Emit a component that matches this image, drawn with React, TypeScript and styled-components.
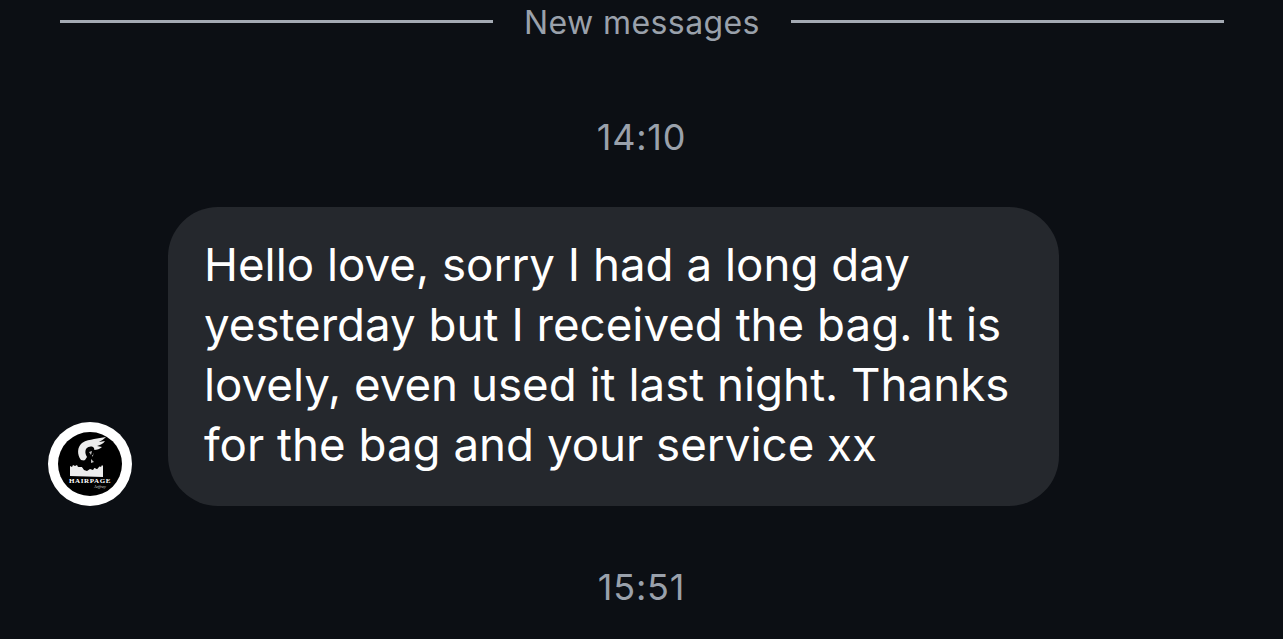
import React from 'react'
import styled, { createGlobalStyle } from 'styled-components'

const GlobalStyle = createGlobalStyle`
  html, body {
    margin: 0;
    background-color: #0c0f14;
    font-family: Inter, "Liberation Sans", sans-serif;
    overflow: hidden;
  }
`

const Page = styled.div`
  width: 1283px;
  height: 639px;
  overflow: hidden;
  background-color: #0c0f14;
`

const DividerRow = styled.div`
  display: flex;
  align-items: center;
  gap: 31px;
  height: 43px;
  padding: 0 59px 0 60px;
`

const Line = styled.div`
  flex: 1;
  height: 3px;
  background-color: #a4aab3;
`

const DividerLabel = styled.span`
  padding-top: 2px;
  color: #9aa1ab;
  font-size: 32px;
  letter-spacing: 0.4px;
`

const Time = styled.div<{ $top: number }>`
  margin-top: ${(p) => p.$top}px;
  color: #9aa1ab;
  font-size: 36px;
  letter-spacing: 0.8px;
  line-height: 44px;
  text-align: center;
`

const MessageRow = styled.div`
  display: flex;
  align-items: flex-end;
  gap: 36px;
  margin-top: 48px;
  padding-left: 48px;
`

const Avatar = styled.div`
  display: flex;
  align-items: center;
  justify-content: center;
  width: 84px;
  height: 84px;
  border-radius: 50%;
  background-color: #fff;
`

const Bubble = styled.div`
  width: 891px;
  height: 299px;
  box-sizing: border-box;
  padding: 28px 36px;
  border-radius: 50px;
  background-color: #25282d;
  color: #fff;
  font-size: 45.7px;
  line-height: 60px;
  white-space: nowrap;
`

const Logo = () => (
  <svg width="64" height="64" viewBox="0 0 64 64">
    <circle cx="32" cy="32" r="32" fill="#000" />
    {/* skyline */}
    <path d="M12 44V34l2 1 1-2 2 1 2-1 1 2 2-1 2 1 2 3 3 1 3-2 3 1 2-3 2 2 2-3 2 1 1-2 1 1v11z" fill="#ececec" />
    {/* hair */}
    <path d="M23 28c-4-5-4-13 1-17 4-3 8-3 12-4l12-2c-2 2-5 4-7 5l6-1c-2 3-5 4-8 5l5 1c-2 2-5 3-8 3l-1 6-6 5z" fill="#ececec" />
    {/* face and shoulders */}
    <path d="M28 17c3-3 6-3 8-1 1 3 0 6-2 8l3 4 6 5-4 4-5-2-5 3-5-3-4 0c1-3 4-5 7-7l2-3c-2-3-2-6-1-8z" fill="#000" />
    <path d="M31 20l3-1-1 4zM33 27l3 3-3 1z" fill="#bdbdbd" />
    <text x="32" y="51" fill="#fff" fontSize="7" fontWeight="700" letterSpacing="0.6" textAnchor="middle" fontFamily="Liberation Serif, serif">HAIRPAGE</text>
    <text x="42" y="56" fill="#cfcfcf" fontSize="4.5" fontStyle="italic" textAnchor="middle" fontFamily="Liberation Serif, serif">Jeffrey</text>
  </svg>
)

const App = () => (
  <Page>
    <GlobalStyle />
    <DividerRow>
      <Line />
      <DividerLabel>New messages</DividerLabel>
      <Line />
    </DividerRow>
    <Time $top={72}>14:10</Time>
    <MessageRow>
      <Avatar><Logo /></Avatar>
      <Bubble>
        Hello love, sorry I had a long day<br />
        yesterday but I received the bag. It is<br />
        lovely, even used it last night. Thanks<br />
        for the bag and your service xx
      </Bubble>
    </MessageRow>
    <Time $top={59}>15:51</Time>
  </Page>
)

export default App
